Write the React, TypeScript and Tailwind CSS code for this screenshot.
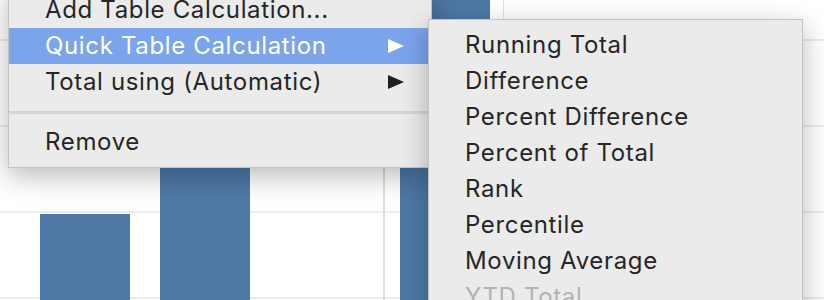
import React from 'react';

const mainItems = [
  { label: 'Add Table Calculation...', arrow: false },
  { label: 'Quick Table Calculation', arrow: true, active: true },
  { label: 'Total using (Automatic)', arrow: true },
];

const quickItems = [
  'Running Total',
  'Difference',
  'Percent Difference',
  'Percent of Total',
  'Rank',
  'Percentile',
  'Moving Average',
];

function Arrow({ white }: { white?: boolean }) {
  return (
    <svg width="16" height="14" viewBox="0 0 16 14" className="shrink-0">
      <polygon points="0,0 16,7 0,14" fill={white ? '#ffffff' : '#1f1f1f'} />
    </svg>
  );
}

function Chart() {
  return (
    <svg width="824" height="300" viewBox="0 0 824 300" className="block">
      <rect width="824" height="300" fill="#ffffff" />
      {[40, 126, 212, 298].map((y) => (
        <rect key={y} x="0" y={y - 1} width="824" height="2" fill="#ececec" />
      ))}
      <rect x="383" y="0" width="2" height="300" fill="#dedede" />
      <rect x="503" y="0" width="1" height="300" fill="#e2e2e2" />
      <rect x="40" y="214" width="90" height="86" fill="#4e79a7" />
      <rect x="160" y="120" width="90" height="180" fill="#4e79a7" />
      <rect x="400" y="0" width="90" height="300" fill="#4e79a7" />
    </svg>
  );
}

export default function App() {
  return (
    <div
      className="relative w-[824px] h-[300px] overflow-hidden bg-white"
      style={{ fontFamily: 'Inter, "Noto Sans", sans-serif' }}
    >
      <Chart />

      {/* main context menu */}
      <div className="absolute left-[8px] top-[-15px] w-[424px] bg-[#ebebeb] border border-[#c4c4c4] pt-[6px] pb-[7px] shadow-[0_8px_26px_rgba(0,0,0,0.28)] text-[24px] tracking-[0.65px] text-[#262626]">
        {mainItems.map((it) => (
          <div
            key={it.label}
            className={`h-[36px] flex items-center justify-between pl-[36px] pr-[27px] ${
              it.active ? 'bg-[#7ba4eb] text-white' : ''
            }`}
          >
            <span className="leading-none">{it.label}</span>
            {it.arrow && <Arrow white={it.active} />}
          </div>
        ))}
        <div className="h-[24px] flex items-center">
          <div className="w-full h-[3px] bg-[#d5d5d5]" />
        </div>
        <div className="h-[36px] flex items-center pl-[36px]">
          <span className="leading-none">Remove</span>
        </div>
      </div>

      {/* quick table calculation submenu */}
      <div className="absolute left-[428px] top-[19px] w-[375px] h-[320px] bg-[#ebebeb] border border-[#c2c2c2] pt-[7px] shadow-[0_8px_26px_rgba(0,0,0,0.28)] text-[24px] tracking-[0.65px] text-[#262626]">
        {quickItems.map((q) => (
          <div key={q} className="h-[36px] flex items-center pl-[36px]">
            <span className="leading-none">{q}</span>
          </div>
        ))}
        <div className="h-[36px] flex items-center pl-[36px] text-[#b3b3b3]">
          <span className="leading-none">YTD Total</span>
        </div>
      </div>
    </div>
  );
}
